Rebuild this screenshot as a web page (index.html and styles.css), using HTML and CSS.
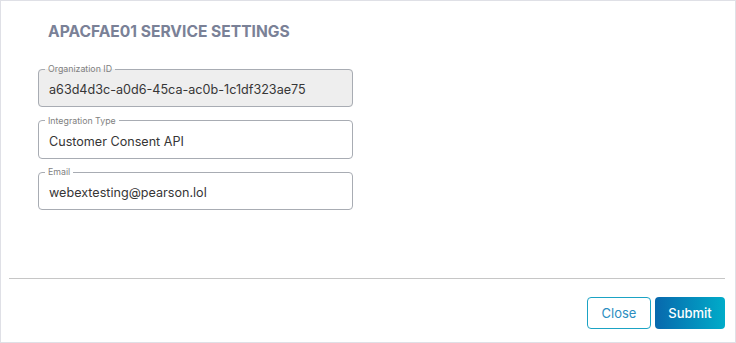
FILE: index.html
```html
<!DOCTYPE html>
<html lang="en">
    <head>
        <meta charset="UTF-8" />
        <title>Service settings</title>
        <link rel="stylesheet" href="styles.css">
    </head>
    <body>
        <div class="obsah">
            <h1 class="nadpis">APACFAE01 SERVICE SETTINGS</h1>

            <fieldset class="pole pole-zamcene">
                <legend>Organization ID</legend>
                <div class="hodnota">a63d4d3c-a0d6-45ca-ac0b-1c1df323ae75</div>
            </fieldset>

            <fieldset class="pole">
                <legend>Integration Type</legend>
                <div class="hodnota">Customer Consent API</div>
            </fieldset>

            <fieldset class="pole">
                <legend>Email</legend>
                <div class="hodnota">webextesting@pearson.lol</div>
            </fieldset>
        </div>

        <div class="paticka">
            <button class="tlacitko tlacitko-zavrit">Close</button>
            <button class="tlacitko tlacitko-odeslat">Submit</button>
        </div>
    </body>
</html>
```

FILE: styles.css
```css
html {
    height: 100%;
}

body {
    margin: 0;
    height: 100%;
    box-sizing: border-box;
    border: 1px solid #dfe0e6;
    font-family: Inter, "Noto Sans", sans-serif;
    background-color: #fff;
    display: flex;
    flex-direction: column;
}

.obsah {
    padding: 21px 0 0 37px;
    display: flex;
    flex-direction: column;
    gap: 8.5px;
}

.nadpis {
    margin: 0 0 14.5px 10px;
    font-size: 15.6px;
    line-height: 19px;
    font-weight: 700;
    color: #7a8197;
}

.pole {
    width: 315px;
    box-sizing: border-box;
    margin: 0;
    padding: 0 10px 8px 10px;
    border: 1px solid #a8acb3;
    border-radius: 4px;
}

.pole legend {
    font-size: 8.8px;
    line-height: 10px;
    color: #7f7f7f;
    padding: 0 3px;
    margin-left: -4px;
}

.pole-zamcene {
    background-color: #eeeeee;
}

.hodnota {
    padding-top: 8px;
    font-size: 12.6px;
    line-height: 16px;
    color: #363636;
}

.paticka {
    margin: auto 10px 0 8px;
    border-top: 1px solid #c6c6c6;
    padding: 18px 0 13px;
    display: flex;
    justify-content: flex-end;
    gap: 4px;
}

.tlacitko {
    height: 32px;
    font-family: Inter, "Noto Sans", sans-serif;
    font-size: 13px;
    border-radius: 4px;
    cursor: pointer;
}

.tlacitko-zavrit {
    width: 64px;
    background-color: #fff;
    border: 1px solid #1ba3c4;
    color: #2b8dbf;
}

.tlacitko-odeslat {
    width: 70px;
    border: none;
    color: #fff;
    font-weight: 500;
    background: linear-gradient(to right, #0868ad, #00acc9);
}
```
